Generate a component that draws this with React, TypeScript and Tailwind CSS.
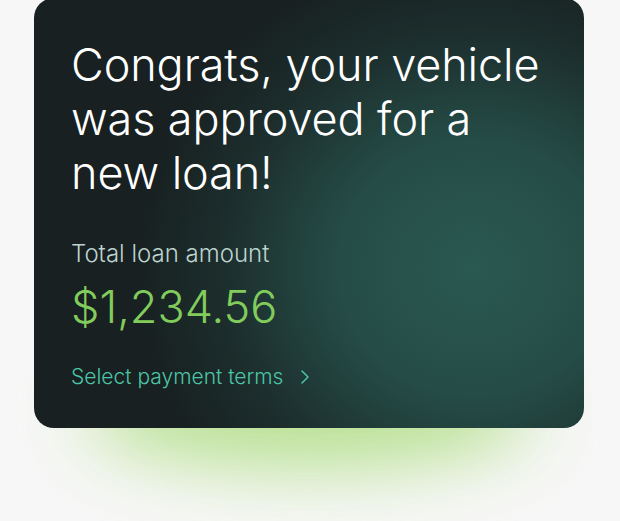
import React from 'react';
import { ChevronRight } from 'lucide-react';

export default function App() {
  return (
    <div className="min-h-[521px] w-full bg-[#f7f7f7] font-['Inter',sans-serif] overflow-hidden">
      <div className="relative w-[550px] ml-[34px] -mt-[2px]">
        <div className="absolute left-[50px] right-[50px] top-[360px] h-[110px] rounded-[50%] bg-[#b0de85] opacity-90 blur-[36px]"></div>
        <div className="relative h-[430px] rounded-[20px] overflow-hidden bg-[#182021] bg-[radial-gradient(ellipse_340px_320px_at_440px_270px,#2a5950_0%,#254c46_40%,#1c2d2c_75%,#182021_100%)] pl-[37px] pt-[40px]">
          <h1 className="text-[45px] leading-[54px] font-light text-white tracking-[-0.1px]">
            Congrats, your vehicle<br />was approved for a<br />new loan!
          </h1>
          <p className="mt-[39px] text-[24px] leading-[30px] font-light text-[#bcd3cf]">Total loan amount</p>
          <p className="mt-[13px] text-[45px] leading-[50px] font-light text-[#82cc5c]">$1,234.56</p>
          <div className="mt-[31px] flex items-center gap-[10px] text-[21px] leading-[28px] font-light text-[#4cc5a6]">
            <span>Select payment terms</span>
            <ChevronRight size={24} strokeWidth={1.5} />
          </div>
        </div>
      </div>
    </div>
  );
}
